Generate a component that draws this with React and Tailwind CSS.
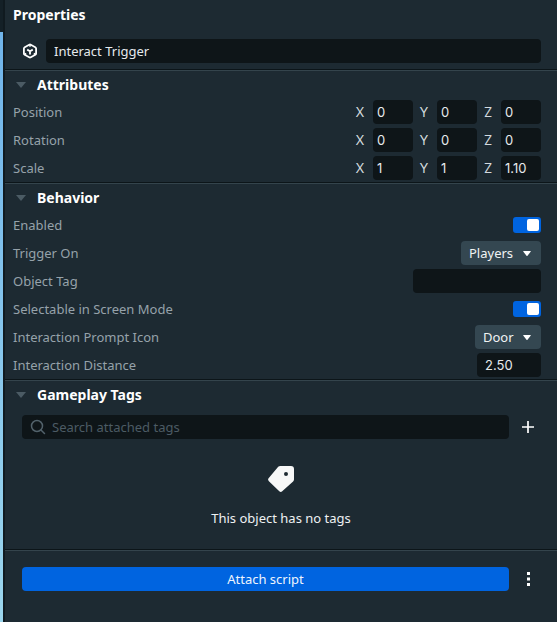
import { useState } from 'react';

function Section({ title, children }) {
  return (
    <section className="border-t border-[#0c1519]">
      <div className="border-t border-[#34444c]">
        <h2 className="text-sm font-bold text-white">
          <button type="button" className="flex h-[27px] w-full items-center gap-2.5 pl-2.5 text-left">
            <svg viewBox="0 0 10 6" className="ml-px h-1.5 w-2.5 fill-[#4b5b64]" aria-hidden="true">
              <path d="M0 0h10L5 6z" />
            </svg>
            <span className="pl-px">{title}</span>
          </button>
        </h2>
        {children}
      </div>
    </section>
  );
}

const field = 'h-6 rounded bg-[#0e1518] text-[#e6eaec] outline-none';

function Row({ label, id, children }) {
  return (
    <div className="flex h-7 items-center justify-between pr-4 pl-2">
      <label htmlFor={id} className="text-[#96a2aa]">{label}</label>
      {children}
    </div>
  );
}

function VectorRow({ label, values }) {
  return (
    <div role="group" aria-label={label} className="flex h-7 items-center justify-between pr-4 pl-2">
      <span className="text-[#96a2aa]">{label}</span>
      <div className="flex font-[Inter,sans-serif]">
        {['X', 'Y', 'Z'].map((axis, i) => (
          <label key={axis} className="flex items-center text-[#d3dade]">
            <span className="w-6 pr-0.5 text-center">{axis}</span>
            <input className={`${field} w-10 px-1`} defaultValue={values[i]} />
          </label>
        ))}
      </div>
    </div>
  );
}

function Toggle({ id }) {
  const [on, setOn] = useState(true);
  return (
    <input
      id={id}
      type="checkbox"
      role="switch"
      checked={on}
      onChange={() => setOn(!on)}
      className="flex h-4 w-7 appearance-none items-center rounded-[3px] bg-[#3a4a53] px-0.5 before:size-3 before:rounded-[2px] before:bg-white checked:justify-end checked:bg-[#0064e0]"
    />
  );
}

function Dropdown({ id, width, options }) {
  return (
    <div className="relative">
      <select id={id} className={`block h-6 appearance-none rounded bg-[#344751] pl-2 text-[#f0f3f4] outline-none ${width}`}>
        {options.map((o) => (
          <option key={o}>{o}</option>
        ))}
      </select>
      <svg viewBox="0 0 8 5" className="pointer-events-none absolute top-2.5 right-2.5 h-[5px] w-2 fill-white" aria-hidden="true">
        <path d="M.6 0h6.8q.8.1.2.8L4.5 4.7q-.5.5-1 0L.4.8Q-.2.1.6 0z" />
      </svg>
    </div>
  );
}

export default function App() {
  return (
    <div className="flex min-h-screen bg-[#1d2a32] font-['Noto_Sans',sans-serif] text-[13px] leading-5">
      <div className="w-[3px] shrink-0 bg-[#142027] pt-8">
        <div className="h-full bg-linear-to-b from-[#70b4ea] to-[#9bd5ec]" />
      </div>
      <main className="min-w-0 flex-1 border-l-2 border-[#101a20]">
        <h1 className="flex h-[39px] items-start px-2 pt-[5px] text-sm font-bold text-white">Properties</h1>
        <div className="flex items-center gap-2 pr-4 pb-1.5 pl-[17px]">
          <svg viewBox="0 0 16 16" className="size-4 shrink-0" fill="none" stroke="#fff" strokeWidth="1.8" strokeLinejoin="round" aria-hidden="true">
            <path d="M7.200 1.700q.8-.4 1.600 0l4.500 2.500q.8.500.8 1.400v4.800q0 .9-.8 1.400l-4.500 2.500q-.8.400-1.600 0l-4.500-2.500q-.8-.5-.8-1.400V5.600q0-.9.8-1.400z" />
            <path d="M5.200 6.600 8 8.200l2.800-1.600M8 8.200v3.200" />
            <path d="M8 2v1.800M2.500 11.500l1.700-1M13.500 11.500l-1.700-1" strokeWidth="1.5" />
          </svg>
          <input aria-label="Object name" defaultValue="Interact Trigger" className={`${field} min-w-0 flex-1 px-2`} />
        </div>

        <Section title="Attributes">
          <VectorRow label="Position" values={['0', '0', '0']} />
          <VectorRow label="Rotation" values={['0', '0', '0']} />
          <VectorRow label="Scale" values={['1', '1', '1.10']} />
        </Section>

        <Section title="Behavior">
          <Row label="Enabled" id="enabled"><Toggle id="enabled" /></Row>
          <Row label="Trigger On" id="trigger">
            <Dropdown id="trigger" width="w-20" options={['Players', 'Objects']} />
          </Row>
          <Row label="Object Tag" id="tag"><input id="tag" className={`${field} w-32 px-2`} /></Row>
          <Row label="Selectable in Screen Mode" id="selectable"><Toggle id="selectable" /></Row>
          <Row label="Interaction Prompt Icon" id="icon">
            <Dropdown id="icon" width="w-[66px]" options={['Door', 'Hand']} />
          </Row>
          <Row label="Interaction Distance" id="distance">
            <input id="distance" defaultValue="2.50" className={`${field} w-16 px-2 font-[Inter,sans-serif]`} />
          </Row>
        </Section>

        <Section title="Gameplay Tags">
          <div className="flex items-center gap-[11px] pt-[7px] pr-[21px] pl-[17px]">
            <label className={`${field} flex min-w-0 flex-1 items-center gap-1.5 px-2`}>
              <svg viewBox="0 0 16 16" className="size-4 shrink-0" fill="none" stroke="#52626b" strokeWidth="1.5" strokeLinecap="round" aria-hidden="true">
                <circle cx="7" cy="7" r="5.500" />
                <path d="m11 11 3.500 3.500" />
              </svg>
              <input aria-label="Search attached tags" placeholder="Search attached tags" className="min-w-0 flex-1 outline-none placeholder:text-[#4c5b64]" />
            </label>
            <button type="button" aria-label="Add tag" className="flex h-6 w-4 items-center justify-center">
              <svg viewBox="0 0 12 12" className="size-3" stroke="#fff" strokeWidth="1.7" aria-hidden="true">
                <path d="M6 0v12M0 6h12" />
              </svg>
            </button>
          </div>
          <div className="flex flex-col items-center gap-4 pt-[27px] pb-[21px] text-[#eef1f2]">
            <svg viewBox="0 0 26 26" className="size-[26px] fill-[#f7f8f8]" aria-hidden="true">
              <path fillRule="evenodd" d="M10.200.800Q11.100 0 12.300 0H23q3 0 3 3v10.500q0 1.200-.9 2.100L14.200 25.300q-1.500 1.200-2.900-.1L.9 15.200q-1.600-1.600-.1-3.300zM18 6a2 2 0 1 0 0 4 2 2 0 0 0 0-4z" />
            </svg>
            <p>This object has no tags</p>
          </div>
        </Section>

        <footer className="border-t border-[#0c1519]">
          <div className="flex items-center gap-[11px] border-t border-[#34444c] pt-4 pr-[21px] pb-4 pl-[17px]">
            <button type="button" className="h-6 flex-1 rounded bg-[#0064e0] text-[#eef4fd]">Attach script</button>
            <button type="button" aria-label="More options" className="flex h-6 w-4 items-center justify-center">
              <svg viewBox="0 0 3 14" className="h-3.5 w-[3px] fill-white" aria-hidden="true">
                <path d="M0 0h3v3H0zM0 5.500h3v3H0zM0 11h3v3H0z" />
              </svg>
            </button>
          </div>
        </footer>
      </main>
    </div>
  );
}
